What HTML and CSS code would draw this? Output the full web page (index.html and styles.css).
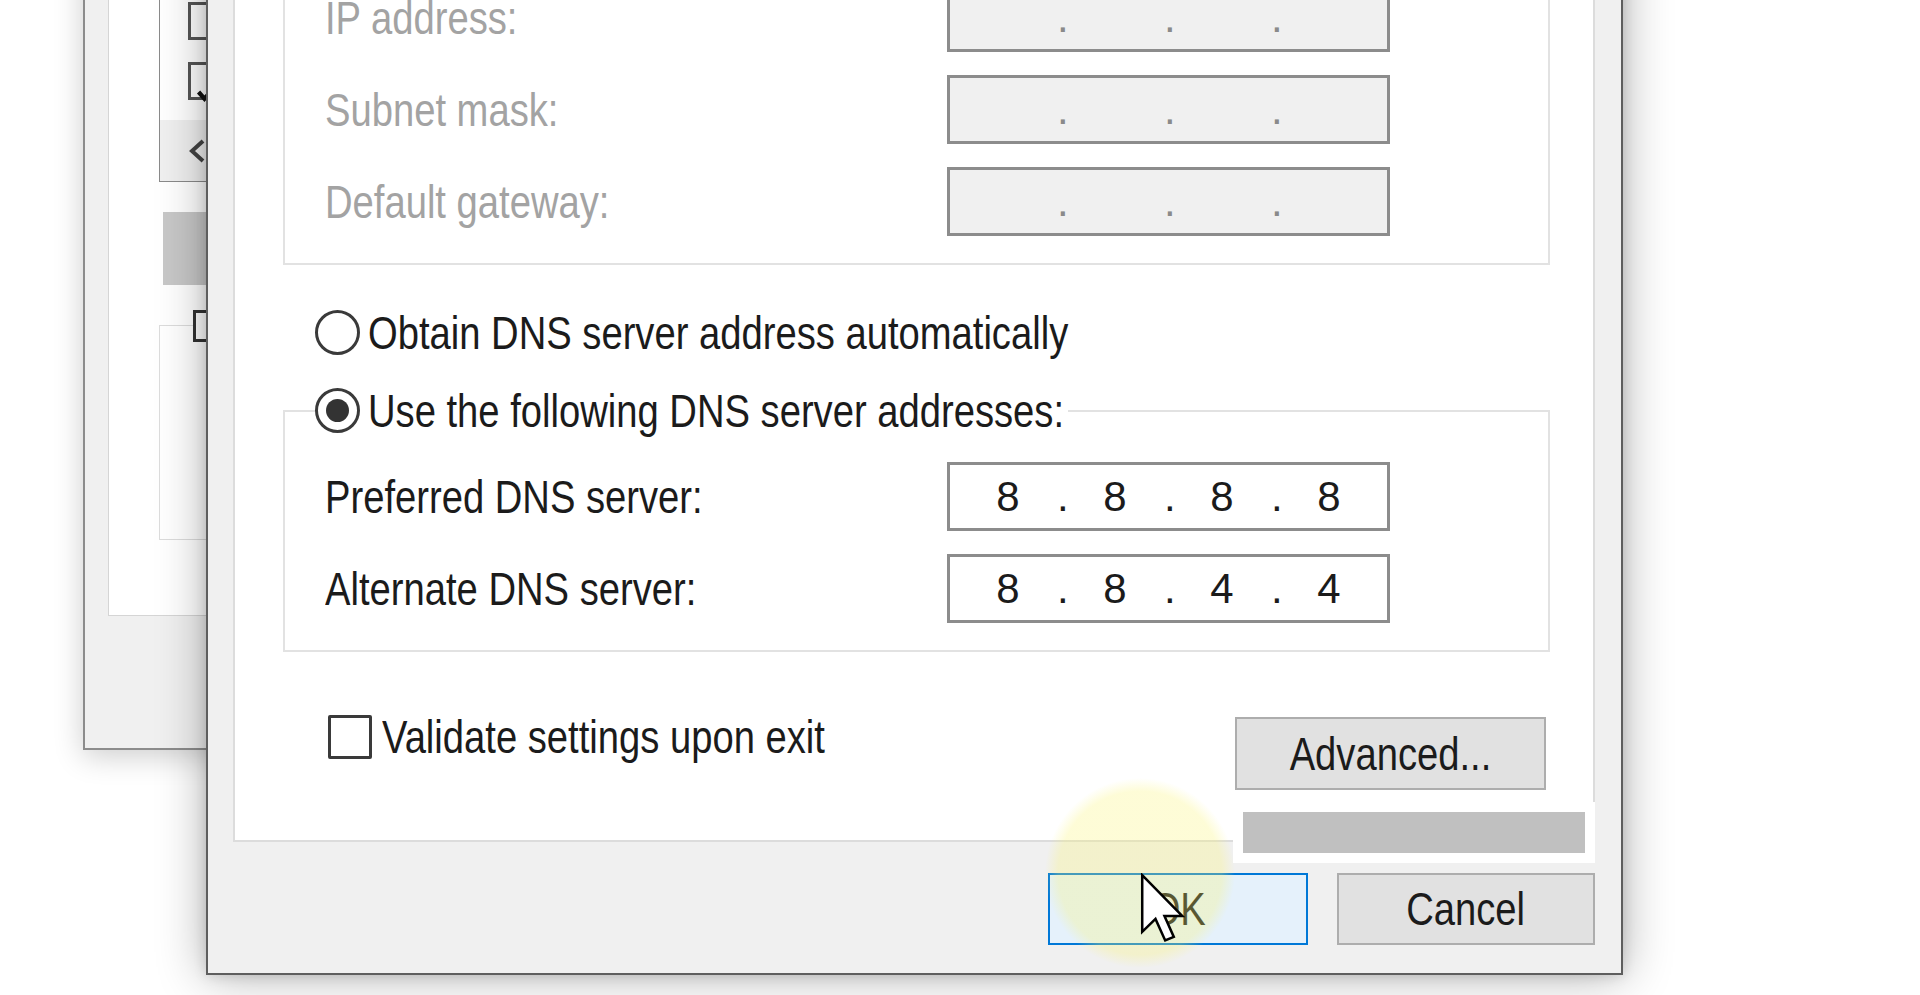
FILE: index.html
```html
<!DOCTYPE html>
<html lang="en">
<head>
    <meta charset="UTF-8">
    <title>Internet Protocol Version 4 (TCP/IPv4) Properties</title>
    <link rel="stylesheet" href="styles.css">
</head>
<body>
<div class="desktop">

    <!-- window behind the dialog -->
    <div class="window back-window">
        <div class="back-page">
            <div class="listbox">
                <div class="list-items">
                    <div class="list-row"><span class="box"></span></div>
                    <div class="list-row"><span class="box checked">
                        <svg viewBox="0 0 38 38"><polyline points="9,19 16,27 30,11"/></svg>
                    </span></div>
                </div>
                <div class="hscroll">
                    <svg class="chevron" viewBox="0 0 20 26"><polyline points="16,3 5,13 16,23"/></svg>
                </div>
            </div>
            <div class="back-button"></div>
            <div class="back-group">
                <span class="back-legend"></span>
            </div>
        </div>
    </div>

    <!-- IPv4 properties dialog -->
    <div class="window dialog">
        <div class="page">
            <div class="group ip-group">
                <div class="field-row">
                    <span class="field-label disabled"><span class="t">IP address:</span></span>
                    <div class="ip-box off">
                        <span></span><span>.</span><span></span><span>.</span><span></span><span>.</span><span></span>
                    </div>
                </div>
                <div class="field-row">
                    <span class="field-label disabled"><span class="t">Subnet mask:</span></span>
                    <div class="ip-box off">
                        <span></span><span>.</span><span></span><span>.</span><span></span><span>.</span><span></span>
                    </div>
                </div>
                <div class="field-row">
                    <span class="field-label disabled"><span class="t">Default gateway:</span></span>
                    <div class="ip-box off">
                        <span></span><span>.</span><span></span><span>.</span><span></span><span>.</span><span></span>
                    </div>
                </div>
            </div>

            <div class="radio-row first-dns">
                <span class="radio"></span>
                <span class="t">Obtain DNS server address automatically</span>
            </div>

            <fieldset class="group dns-group">
                <legend class="radio-row">
                    <span class="radio checked"></span>
                    <span class="t">Use the following DNS server addresses:</span>
                </legend>
                <div class="field-row">
                    <span class="field-label"><span class="t">Preferred DNS server:</span></span>
                    <div class="ip-box">
                        <span>8</span><span>.</span><span>8</span><span>.</span><span>8</span><span>.</span><span>8</span>
                    </div>
                </div>
                <div class="field-row">
                    <span class="field-label"><span class="t">Alternate DNS server:</span></span>
                    <div class="ip-box">
                        <span>8</span><span>.</span><span>8</span><span>.</span><span>4</span><span>.</span><span>4</span>
                    </div>
                </div>
            </fieldset>

            <div class="options">
                <label class="check-row">
                    <span class="checkbox"></span>
                    <span class="t">Validate settings upon exit</span>
                </label>
                <button class="btn advanced"><span class="t">Advanced...</span></button>
            </div>
        </div>

        <div class="buttons">
            <button class="btn default"><span class="t">OK</span></button>
            <button class="btn"><span class="t">Cancel</span></button>
        </div>
    </div>

    <!-- recording overlays -->
    <div class="click-halo"></div>
    <div class="redact"><div class="redact-bar"></div></div>
    <svg class="cursor" viewBox="0 0 12.5 19.5">
        <polygon points="0.6,0.6 0.6,16.4 4.3,12.8 7,18.8 9.4,17.8 6.8,12 11.8,12"/>
    </svg>
</div>
</body>
</html>
```

FILE: styles.css
```css
* {
    box-sizing: border-box;
}

body {
    margin: 0;
    background: #fff;
    font-family: "Liberation Sans", Arial, sans-serif;
    font-size: 46px;
    color: #1b1b1b;
    overflow: hidden;
}

/* the dialog font is a narrow one, squeeze the regular face */
.t {
    display: inline-block;
    white-space: nowrap;
    transform: scaleX(0.83);
    transform-origin: 0 50%;
}

.desktop {
    position: relative;
    width: 1920px;
    height: 995px;
    overflow: hidden;
}

.window {
    position: absolute;
    background: #f0f0f0;
}

/* back window */
.back-window {
    left: 83px;
    top: -50px;
    width: 500px;
    border: 2px solid #8c8c8c;
    padding: 0 0 132px 23px;
    box-shadow: 0 6px 28px rgba(0, 0, 0, 0.2);
}

.back-page {
    background: #fff;
    border: 1px solid #d5d5d5;
    border-top: 0;
    padding: 0 0 75px 50px;
}

.listbox {
    height: 230px;
    border: 1px solid #8a8a8a;
    border-top: 0;
    display: flex;
    flex-direction: column;
}

.list-items {
    flex: 1;
    display: flex;
    flex-direction: column;
    justify-content: flex-end;
    padding: 0 0 9px 28px;
}

.list-row {
    height: 60px;
    display: flex;
    align-items: center;
}

.list-row .box {
    width: 38px;
    height: 38px;
    border: 3px solid #555;
    background: #fff;
}

.list-row .box svg {
    width: 100%;
    height: 100%;
    fill: none;
    stroke: #111;
    stroke-width: 5;
}

.hscroll {
    height: 61px;
    background: #f0f0f0;
    display: flex;
    align-items: center;
    padding-left: 27px;
}

.chevron {
    width: 20px;
    height: 26px;
    fill: none;
    stroke: #444;
    stroke-width: 4;
}

.back-button {
    width: 43px;
    height: 73px;
    margin: 30px 0 0 4px;
    background: #c8c8c8;
}

.back-group {
    height: 215px;
    margin-top: 40px;
    border: 1px solid #dcdcdc;
}

.back-legend {
    display: block;
    width: 30px;
    height: 32px;
    margin: -16px 0 0 33px;
    border: 3px solid #333;
    background: #fff;
}

/* front dialog */
.dialog {
    left: 206px;
    bottom: 20px;
    width: 1417px;
    border: 2px solid #5e5e5e;
    padding: 0 26px 28px 25px;
    box-shadow: 0 0 46px rgba(0, 0, 0, 0.32), 0 0 12px rgba(0, 0, 0, 0.14);
    z-index: 1;
}

.page {
    background: #fff;
    border: 2px solid #dcdcdc;
    border-top: 0;
    padding: 0 43px 50px 48px;
}

.radio-row {
    display: flex;
    align-items: center;
    gap: 8px;
    height: 45px;
    padding-left: 32px;
    white-space: nowrap;
}

.radio {
    flex: none;
    width: 45px;
    height: 45px;
    border: 3px solid #3a3a3a;
    border-radius: 50%;
    background: #fff;
    display: flex;
    align-items: center;
    justify-content: center;
}

.radio.checked::after {
    content: "";
    width: 23px;
    height: 23px;
    border-radius: 50%;
    background: #333;
}

.disabled {
    color: #a3a3a3;
}

.group {
    margin: 0;
    border: 2px solid #e2e2e2;
    padding: 29px 0 27px 40px;
}

.ip-group {
    border-top: 0;
    padding-top: 40px;
}

.dns-group {
    margin-top: 33px;
}

/* legend width follows the squeezed text, so the frame line starts right after it */
.dns-group legend.radio-row {
    width: 753px;
    padding: 0;
    margin-left: -10px;
}

.first-dns {
    margin-top: 45px;
}

.field-row {
    display: flex;
    align-items: center;
    height: 69px;
}

.field-row + .field-row {
    margin-top: 23px;
}

.field-label {
    width: 622px;
    white-space: nowrap;
}

.ip-box {
    width: 443px;
    height: 69px;
    border: 3px solid #8c8c8c;
    background: #fff;
    padding-left: 11px;
    display: grid;
    grid-template-columns: 94px 13px 94px 13px 94px 13px 94px;
    align-items: center;
    font-size: 42px;
    line-height: 1;
    color: #1b1b1b;
}

.ip-box span {
    text-align: center;
}

.ip-box span:nth-child(even) {
    padding-left: 2px;
}

.ip-box.off {
    background: #f0f0f0;
    color: #8a8a8a;
}

.options {
    display: flex;
    align-items: flex-start;
    margin-top: 63px;
    padding-left: 45px;
}

.check-row {
    display: flex;
    align-items: center;
    gap: 10px;
    height: 44px;
}

.checkbox {
    flex: none;
    width: 44px;
    height: 44px;
    border: 3px solid #3a3a3a;
    border-radius: 2px;
    background: #fff;
}

.btn {
    width: 258px;
    height: 72px;
    border: 2px solid #adadad;
    background: #e1e1e1;
    font: inherit;
    color: #1b1b1b;
    padding: 0;
}

.btn .t {
    transform-origin: 50% 50%;
}

.btn.advanced {
    width: 311px;
    height: 73px;
    margin: 2px 4px 0 auto;
}

.btn.default {
    width: 260px;
    border-color: #0078d7;
    background: #e5f1fb;
}

.buttons {
    display: flex;
    justify-content: flex-end;
    gap: 29px;
    margin-top: 31px;
}

/* overlays from the screen recording */
.click-halo {
    position: absolute;
    left: 1045px;
    top: 778px;
    width: 190px;
    height: 190px;
    border-radius: 50%;
    background: radial-gradient(circle closest-side, rgba(250, 244, 110, 0.28) 86%, rgba(250, 244, 110, 0) 100%);
    z-index: 2;
}

.redact {
    position: absolute;
    left: 1233px;
    top: 802px;
    width: 362px;
    height: 61px;
    padding: 10px;
    background: #fff;
    z-index: 2;
}

.redact-bar {
    height: 100%;
    background: #c0c0c0;
}

.cursor {
    position: absolute;
    left: 1140px;
    top: 873px;
    width: 45px;
    height: 70px;
    z-index: 3;
}

.cursor polygon {
    fill: #fff;
    stroke: #000;
    stroke-width: 0.7;
    stroke-linejoin: miter;
}
```
